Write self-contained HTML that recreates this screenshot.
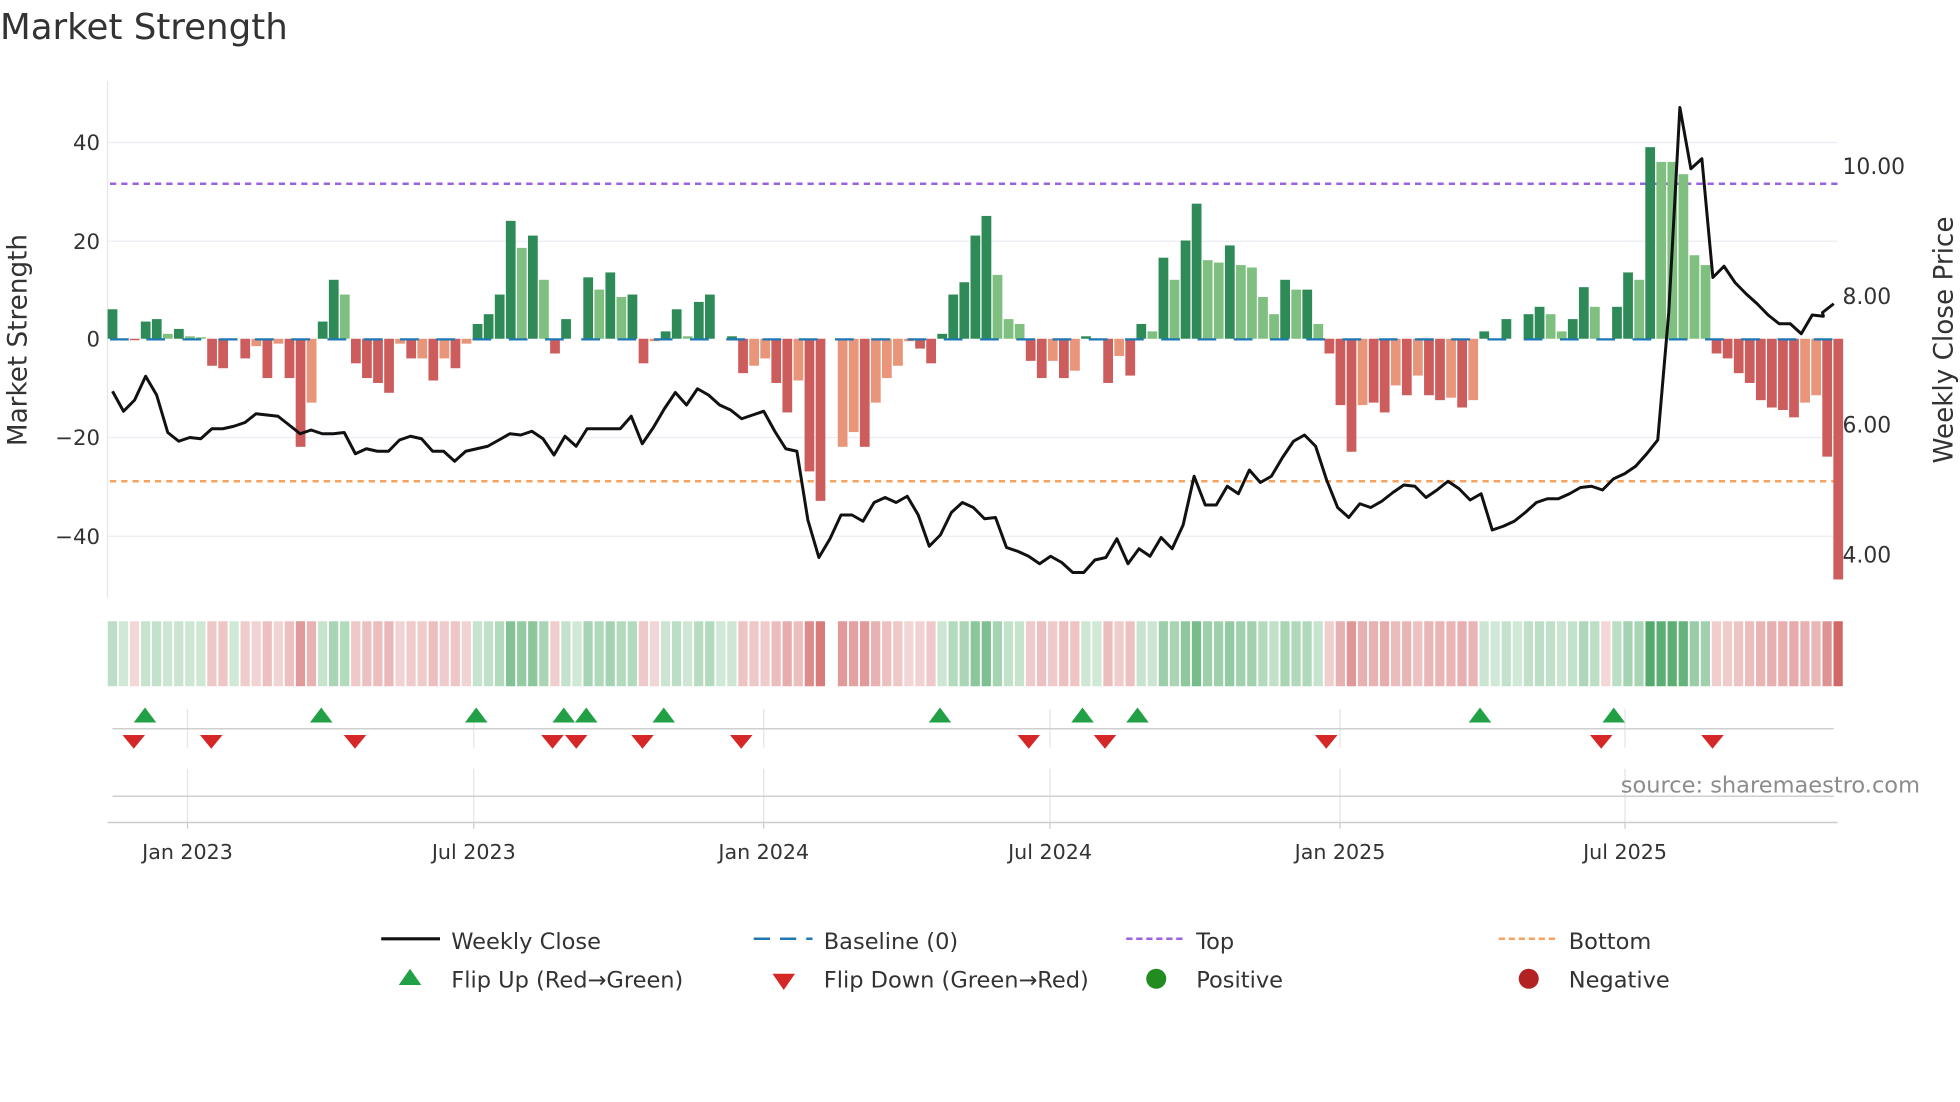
<!DOCTYPE html>
<html><head><meta charset="utf-8"><style>
html,body{margin:0;padding:0;background:#fff;}
svg{display:block;font-family:"DejaVu Sans","Liberation Sans",sans-serif;}
</style></head><body>
<svg id="c" width="1960" height="1102" viewBox="0 0 1568 881.6" xmlns="http://www.w3.org/2000/svg">
<rect width="1568" height="882" fill="#fff"/>
<text x="0" y="31" font-size="28.5" fill="#333">Market Strength</text>
<g stroke="#ececf2" stroke-width="1">
<line x1="86" y1="114" x2="1470" y2="114"/><line x1="86" y1="193" x2="1470" y2="193"/>
<line x1="86" y1="350" x2="1470" y2="350"/><line x1="86" y1="429" x2="1470" y2="429"/>
</g>
<line x1="86" y1="65" x2="86" y2="478" stroke="#e6e6e6"/>
<g font-size="17" fill="#333" text-anchor="end">
<text x="80" y="120">40</text><text x="80" y="199">20</text><text x="80" y="277">0</text>
<text x="80" y="356">−20</text><text x="80" y="435">−40</text>
</g>
<text transform="translate(21,272) rotate(-90)" font-size="21" fill="#333" text-anchor="middle">Market Strength</text>
<g font-size="17.5" fill="#333">
<text x="1474" y="139">10.00</text><text x="1474" y="243">8.00</text>
<text x="1474" y="346">6.00</text><text x="1474" y="450">4.00</text>
</g>
<text transform="translate(1562,272) rotate(-90)" font-size="21" fill="#333" text-anchor="middle">Weekly Close Price</text>
<line x1="88" y1="147" x2="1470" y2="147" stroke="#9a62e0" stroke-width="2" stroke-dasharray="5 4"/>
<line x1="88" y1="385" x2="1470" y2="385" stroke="#f4a460" stroke-width="2" stroke-dasharray="5 4"/>
<g id="bars"></g>
<line x1="88" y1="271.5" x2="1468" y2="271.5" stroke="#1f77b4" stroke-width="1.8" stroke-dasharray="15 14"/>
<polyline id="price" fill="none" stroke="#111" stroke-width="2.4" stroke-linejoin="round"/>
<g id="strip"></g>
<g stroke="#e4e4e4" stroke-width="1">
<line x1="150" y1="567" x2="150" y2="598"/><line x1="379" y1="567" x2="379" y2="598"/><line x1="611" y1="567" x2="611" y2="598"/>
<line x1="840" y1="567" x2="840" y2="598"/><line x1="1072" y1="567" x2="1072" y2="598"/><line x1="1300" y1="567" x2="1300" y2="598"/>
<line x1="150" y1="615" x2="150" y2="658"/><line x1="379" y1="615" x2="379" y2="658"/><line x1="611" y1="615" x2="611" y2="658"/>
<line x1="840" y1="615" x2="840" y2="658"/><line x1="1072" y1="615" x2="1072" y2="658"/><line x1="1300" y1="615" x2="1300" y2="658"/>
</g>
<line x1="90" y1="583" x2="1467" y2="583" stroke="#cfcfcf" stroke-width="1.2"/>
<line x1="90" y1="637" x2="1467" y2="637" stroke="#cfcfcf" stroke-width="1.2"/>
<line x1="86" y1="658" x2="1470" y2="658" stroke="#ccc" stroke-width="1.2"/>
<g id="marks"></g>
<text x="1536" y="634" font-size="18" fill="#8c8c8c" text-anchor="end">source: sharemaestro.com</text>
<g font-size="16.5" fill="#333" text-anchor="middle">
<text x="150" y="687">Jan 2023</text><text x="379" y="687">Jul 2023</text><text x="611" y="687">Jan 2024</text>
<text x="840" y="687">Jul 2024</text><text x="1072" y="687">Jan 2025</text><text x="1300" y="687">Jul 2025</text>
</g>
<g stroke="#ccc"><line x1="150" y1="658" x2="150" y2="663"/><line x1="379" y1="658" x2="379" y2="663"/><line x1="611" y1="658" x2="611" y2="663"/><line x1="840" y1="658" x2="840" y2="663"/><line x1="1072" y1="658" x2="1072" y2="663"/><line x1="1300" y1="658" x2="1300" y2="663"/></g>
<g font-size="18" fill="#333">
<line x1="305" y1="751" x2="352" y2="751" stroke="#111" stroke-width="2.5"/><text x="361" y="759">Weekly Close</text>
<line x1="603" y1="751" x2="650" y2="751" stroke="#1f77b4" stroke-width="2" stroke-dasharray="13 8"/><text x="659" y="759">Baseline (0)</text>
<line x1="901" y1="751" x2="948" y2="751" stroke="#9a62e0" stroke-width="2" stroke-dasharray="5 3"/><text x="957" y="759">Top</text>
<line x1="1199" y1="751" x2="1246" y2="751" stroke="#f4a460" stroke-width="2" stroke-dasharray="5 3"/><text x="1255" y="759">Bottom</text>
<polygon points="328,775 319,788 337,788" fill="#22a045"/><text x="361" y="790">Flip Up (Red→Green)</text>
<polygon points="618,779 636,779 627,792" fill="#d62728"/><text x="659" y="790">Flip Down (Green→Red)</text>
<circle cx="925" cy="783" r="8" fill="#228b22"/><text x="957" y="790">Positive</text>
<circle cx="1223" cy="783" r="8" fill="#b22222"/><text x="1255" y="790">Negative</text>
</g>
</svg>
<script>
var NS="http://www.w3.org/2000/svg";
function el(t,a,p){var e=document.createElementNS(NS,t);for(var k in a)e.setAttribute(k,a[k]);p.appendChild(e);return e;}
var s="6,0,-0.3,3.5,4,1L,2,0.5L,0.3L,-5.5,-6,0,-4,-1.5L,-8,-1L,-8,-22,-13L,3.5,12,9L,-5,-8,-9,-11,-1L,-4,-4L,-8.5,-4L,-6,-1L,3,5,9,24,18.5L,21,12L,-3,4,0,12.5,10L,13.5,8.5L,9,-5,-0.5L,1.5,6,0.5L,7.5,9,0,0.5,-7,-5.5L,-4L,-9,-15,-8.5L,-27,-33,X,-22L,-19L,-22,-13L,-8L,-5.5L,-0.5L,-2,-5,1,9,11.5,21,25,13L,4L,3L,-4.5,-8,-4.5L,-8,-6.5L,0.5,0,-9,-3.5L,-7.5,3,1.5L,16.5,12L,20,27.5,16L,15.5L,19,15L,14.5L,8.5L,5L,12,10L,10,3L,-3,-13.5,-23,-13.5L,-13,-15,-9.5L,-11.5,-7.5L,-11.5,-12.5,-12L,-14,-12.5L,1.5,0,4,0,5,6.5,5L,1.5L,4,10.5,6.5L,-0.3,6.5,13.5,12L,39,36L,36L,33.5L,17L,15L,-3,-4,-7,-9,-12.5,-14,-14.5,-16,-13L,-11.5L,-24,-49".split(",");
var bars=document.getElementById("bars"),strip=document.getElementById("strip");
for(var i=0;i<s.length;i++){
 var t=s[i];if(t=="X")continue;var L=t.indexOf("L")>=0;var v=parseFloat(t);
 var x=90+i*8.85,h=v*3.93;
 var col=v>=0?(L?"#7fc080":"#2e8b57"):(L?"#e8957a":"#cd5c5c");
 if(Math.abs(h)>0.3)el("rect",{x:x-3.9,y:v>=0?271-h:271,width:7.8,height:Math.abs(h),fill:col},bars);
 var a=0.22+0.6*Math.min(1,Math.abs(v)/40);
 el("rect",{x:x-3.8,y:497,width:7.4,height:52,fill:v>=0?"rgba(40,150,70,"+a+")":"rgba(200,70,70,"+a+")"},strip);
}
var p=[313,329,320,301,316,346,353,350,351,343,343,341,338,331,332,333,340,347,344,347,347,346,363,359,361,361,352,349,351,361,361,369,361,359,357,352,347,348,345,351,364,349,357,343,343,343,343,333,355,342,327,314,324,311,316,324,328,335,332,329,345,359,361,416,446,431,412,412,417,402,398,402,397,412,437,428,410,402,406,415,414,438,441,445,451,445,450,458,458,448,446,431,451,439,445,430,439,420,381,404,404,389,395,376,386,381,366,353,348,357,384,406,414,403,406,401,394,388,389,398,392,385,391,400,395,424,421,417,410,402,399,399,395,390,389,392,383,379,373,363,352,250,86,135,127,222,213,226,235,243,252,259,259,267,252,253,250,243];
var pts=[];for(var j=0;j<p.length;j++)pts.push((90+j*8.83*157/(p.length-1)*((p.length-1)/157)).toFixed(1)+","+p[j]);
pts[pts.length-1]="1467,243";pts[pts.length-2]="1458,250";
document.getElementById("price").setAttribute("points",pts.join(" "));
var m=document.getElementById("marks");
[116,257,381,451,469,531,752,866,910,1184,1291].forEach(function(x){el("polygon",{points:x+",566 "+(x-9)+",578 "+(x+9)+",578",fill:"#22a045"},m);});
[107,169,284,442,461,514,593,823,884,1061,1281,1370].forEach(function(x){el("polygon",{points:(x-9)+",588 "+(x+9)+",588 "+x+",599",fill:"#d62728"},m);});
</script>
</body></html>
